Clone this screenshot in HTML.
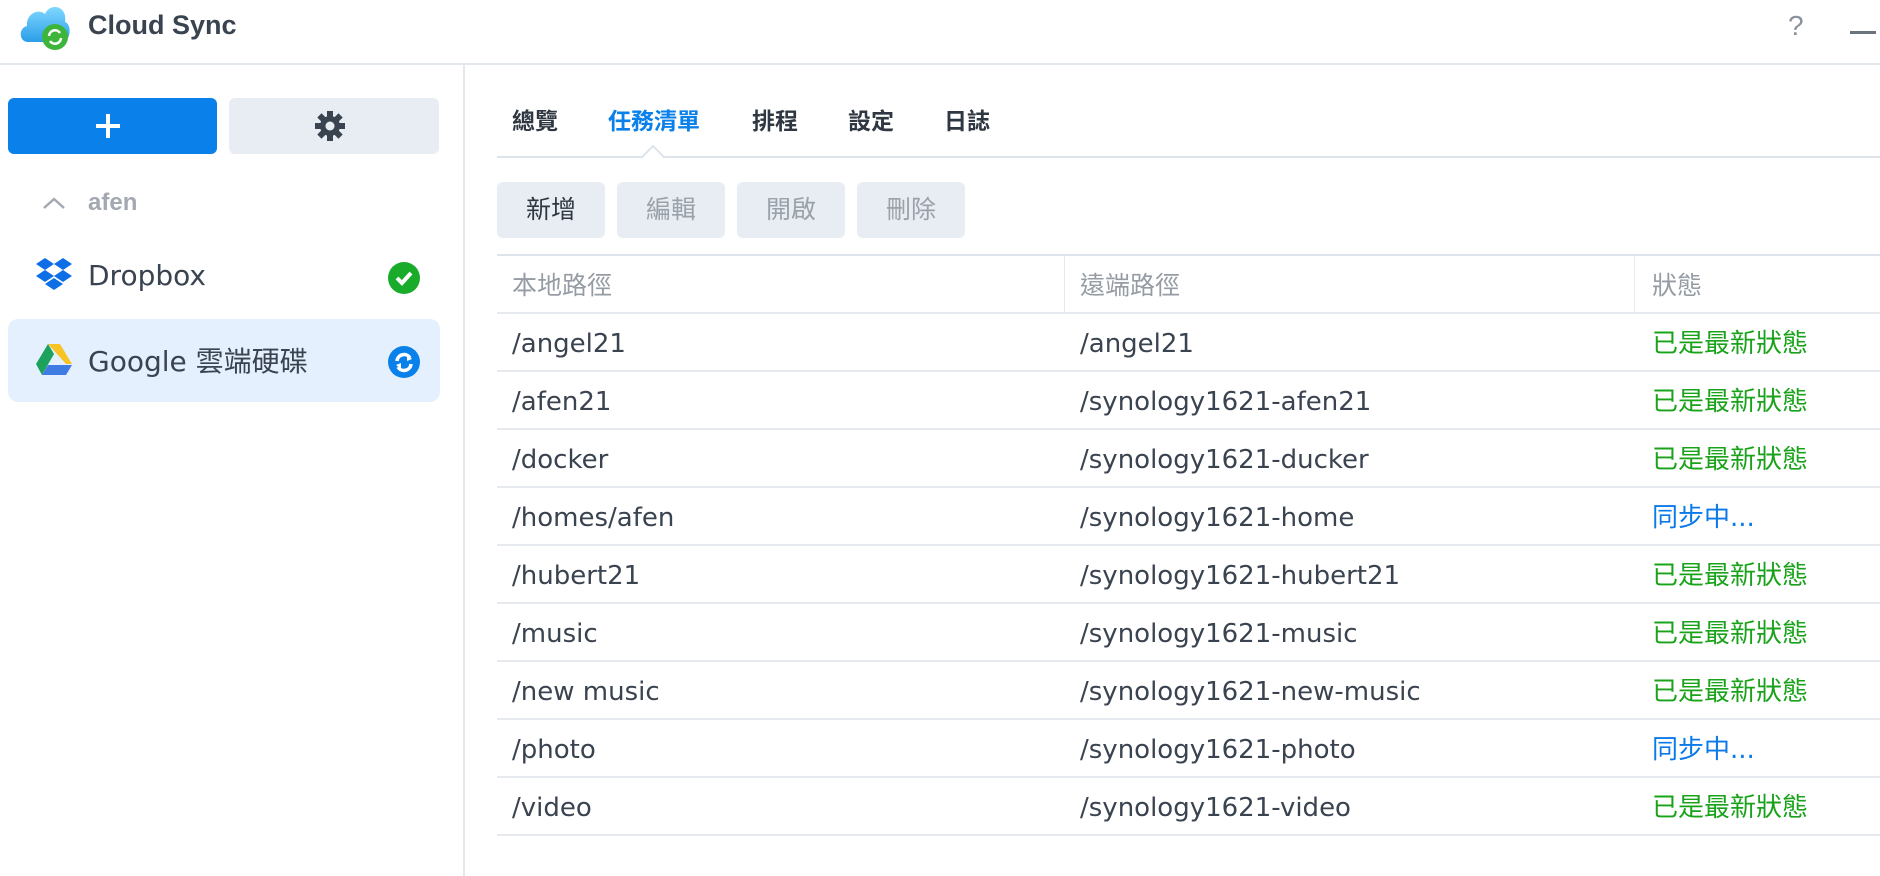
<!DOCTYPE html>
<html><head><meta charset="utf-8"><style>
*{margin:0;padding:0;box-sizing:border-box}
body{width:1880px;height:876px;background:#fff;font-family:"Liberation Sans","Noto Sans CJK TC",sans-serif;color:#3a4350;position:relative;overflow:hidden}
.a{position:absolute}
.hd{top:0;left:0;width:1880px;height:65px;border-bottom:2px solid #e3e8ee}
.side{top:65px;left:463px;width:2px;height:811px;background:#e3e8ee}
.btn{border-radius:6px}
.tab{top:102px;font-size:23px;font-weight:bold;color:#2f3742}
.tb{top:182px;height:56px;width:108px;background:#e8edf3;border-radius:6px;font-size:25px;text-align:center;line-height:56px;color:#9aa1a9}
.row{left:497px;width:1383px;height:58px;border-bottom:2px solid #e6eaef;font-size:26px;line-height:60px;font-family:"DejaVu Sans","Noto Sans CJK TC",sans-serif}
.row span{position:absolute}
.c1{left:15px}.c2{left:583px}.c3{left:1155px}
.g{color:#1aa31a}.b{color:#0a7ae8}
</style></head><body>
<div class="a hd"></div>
<svg class="a" style="left:18px;top:2px" width="54" height="50" viewBox="0 0 54 50">
<defs><linearGradient id="cl" x1="0" y1="0" x2="0" y2="1"><stop offset="0" stop-color="#7fd8ff"/><stop offset="1" stop-color="#2b9ee8"/></linearGradient></defs>
<path d="M10 40 C1 40 0 26 9 24 C8 12 20 6 27 12 C32 0 50 4 47 20 C54 22 53 40 44 40 Z" fill="url(#cl)"/>
<circle cx="37" cy="35" r="13" fill="#3db53a"/>
<path d="M31 34 A6 6 0 0 1 42 31 M43 36 A6 6 0 0 1 32 39" stroke="#fff" stroke-width="2.5" fill="none"/>
</svg>
<div class="a" style="left:88px;top:10px;font-size:27px;font-weight:bold;color:#3a4350">Cloud Sync</div>
<div class="a" style="left:1788px;top:10px;font-size:28px;color:#8a929b">?</div>
<div class="a" style="left:1850px;top:31px;width:26px;height:3px;background:#6b737c"></div>
<div class="a side"></div>
<div class="a btn" style="left:8px;top:98px;width:209px;height:56px;background:#0a80ea"></div>
<div class="a" style="left:96px;top:124px;width:24px;height:4px;background:#fff"></div>
<div class="a" style="left:106px;top:114px;width:4px;height:24px;background:#fff"></div>
<div class="a btn" style="left:229px;top:98px;width:210px;height:56px;background:#e8edf3"></div>
<svg class="a" style="left:314px;top:110px" width="32" height="32" viewBox="0 0 32 32"><g fill="#3a4350"><circle cx="16" cy="16" r="10"/><g id="t"><rect x="13" y="1" width="6" height="30"/></g><use href="#t" transform="rotate(45 16 16)"/><use href="#t" transform="rotate(90 16 16)"/><use href="#t" transform="rotate(135 16 16)"/></g><circle cx="16" cy="16" r="4.5" fill="#e8edf3"/></svg>
<svg class="a" style="left:42px;top:196px" width="24" height="14"><path d="M2 12 L12 3 L22 12" stroke="#a3a9b0" stroke-width="2.5" fill="none"/></svg>
<div class="a" style="left:88px;top:189px;font-size:24px;font-weight:bold;color:#a3a9b0">afen</div>
<svg class="a" style="left:36px;top:258px" width="36" height="34" viewBox="0 0 36 34"><g fill="#0d6ee6"><path d="M9 0 L18 6 L9 12 L0 6Z"/><path d="M27 0 L36 6 L27 12 L18 6Z"/><path d="M9 12 L18 18 L9 24 L0 18Z"/><path d="M27 12 L36 18 L27 24 L18 18Z"/><path d="M18 20 L27 26 L18 32 L9 26Z"/></g></svg>
<div class="a" style="left:88px;top:259px;font-size:28px;font-family:'DejaVu Sans',sans-serif;color:#3a4350">Dropbox</div>
<svg class="a" style="left:388px;top:262px" width="32" height="32"><circle cx="16" cy="16" r="16" fill="#1aab2a"/><path d="M9 16 L14 21 L23 11" stroke="#fff" stroke-width="4" fill="none"/></svg>
<div class="a btn" style="left:8px;top:319px;width:432px;height:83px;background:#e4f0fd;border-radius:10px"></div>
<svg class="a" style="left:36px;top:344px" width="36" height="32" viewBox="0 0 36 32"><path d="M12 0 L24 0 L36 20 L30 20Z" fill="#f7c325"/><path d="M12 0 L18 10 L6 31 L0 20Z" fill="#1da25e"/><path d="M12 21 L36 21 L30 31 L6 31Z" fill="#3e7ce4"/></svg>
<div class="a" style="left:88px;top:342px;font-size:28px;font-family:'DejaVu Sans','Noto Sans CJK TC',sans-serif;color:#3a4350;line-height:40px">Google 雲端硬碟</div>
<svg class="a" style="left:388px;top:346px" width="32" height="32"><circle cx="16" cy="16" r="16" fill="#0a80ea"/><path d="M9 15 A7 7 0 0 1 22 12 M23 18 A7 7 0 0 1 10 21" stroke="#fff" stroke-width="3.5" fill="none"/><path d="M19 9 L24 13 L19 15Z M13 23 L8 19 L13 17Z" fill="#fff"/></svg>

<div class="a tab" style="left:512px">總覽</div>
<div class="a tab" style="left:608px;color:#0a80ea">任務清單</div>
<div class="a tab" style="left:752px">排程</div>
<div class="a tab" style="left:848px">設定</div>
<div class="a tab" style="left:944px">日誌</div>
<div class="a" style="left:497px;top:156px;width:1383px;height:2px;background:#dde4ec"></div>
<svg class="a" style="left:641px;top:145px" width="24" height="14"><path d="M0 13 L12 1 L24 13" stroke="#dde4ec" stroke-width="2" fill="#fff"/></svg>
<div class="a tb" style="left:497px;color:#2f3742">新增</div>
<div class="a tb" style="left:617px">編輯</div>
<div class="a tb" style="left:737px">開啟</div>
<div class="a tb" style="left:857px">刪除</div>
<div class="a" style="left:497px;top:254px;width:1383px;height:2px;background:#dde4ec"></div>
<div class="a row" style="top:256px;color:#959ca4;font-size:25px"><span class="c1">本地路徑</span><span class="c2">遠端路徑</span><span class="c3">狀態</span></div>
<div class="a" style="left:1064px;top:256px;width:1px;height:56px;background:#e6eaef"></div>
<div class="a" style="left:1634px;top:256px;width:1px;height:56px;background:#e6eaef"></div>
<div class="a row" style="top:314px"><span class="c1">/angel21</span><span class="c2">/angel21</span><span class="c3 g">已是最新狀態</span></div>
<div class="a row" style="top:372px"><span class="c1">/afen21</span><span class="c2">/synology1621-afen21</span><span class="c3 g">已是最新狀態</span></div>
<div class="a row" style="top:430px"><span class="c1">/docker</span><span class="c2">/synology1621-ducker</span><span class="c3 g">已是最新狀態</span></div>
<div class="a row" style="top:488px"><span class="c1">/homes/afen</span><span class="c2">/synology1621-home</span><span class="c3 b">同步中...</span></div>
<div class="a row" style="top:546px"><span class="c1">/hubert21</span><span class="c2">/synology1621-hubert21</span><span class="c3 g">已是最新狀態</span></div>
<div class="a row" style="top:604px"><span class="c1">/music</span><span class="c2">/synology1621-music</span><span class="c3 g">已是最新狀態</span></div>
<div class="a row" style="top:662px"><span class="c1">/new music</span><span class="c2">/synology1621-new-music</span><span class="c3 g">已是最新狀態</span></div>
<div class="a row" style="top:720px"><span class="c1">/photo</span><span class="c2">/synology1621-photo</span><span class="c3 b">同步中...</span></div>
<div class="a row" style="top:778px"><span class="c1">/video</span><span class="c2">/synology1621-video</span><span class="c3 g">已是最新狀態</span></div>
</body></html>
